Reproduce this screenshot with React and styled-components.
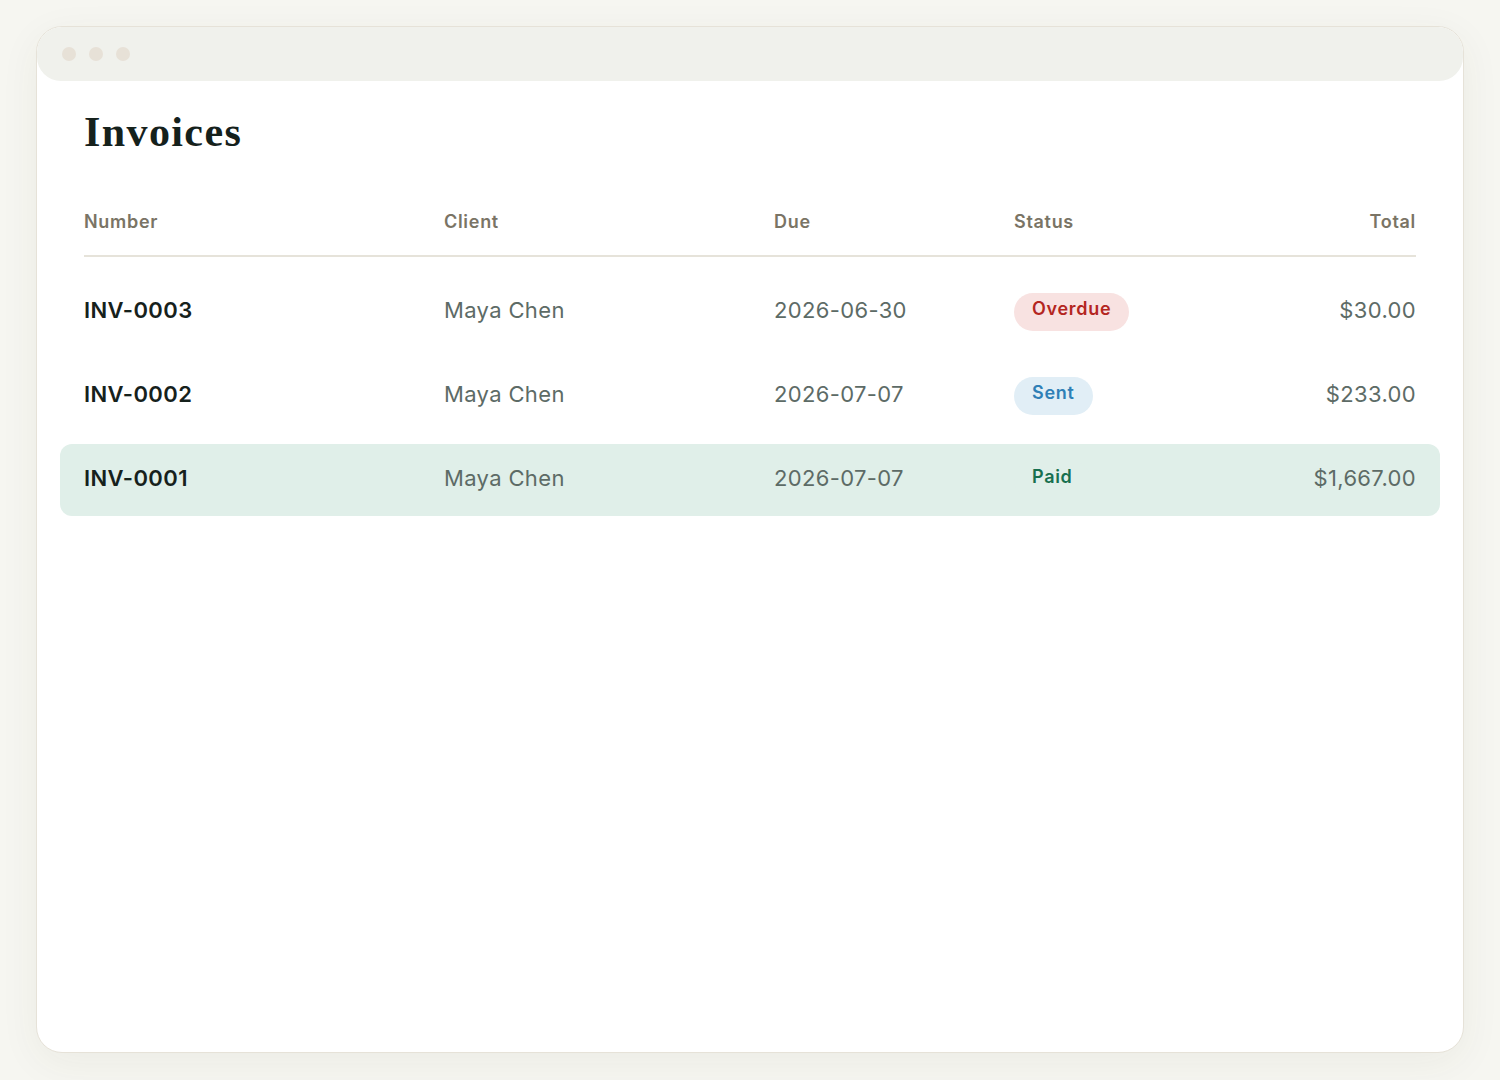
import React from "react";
import styled, { createGlobalStyle } from "styled-components";

const Global = createGlobalStyle`
  html, body { margin: 0; padding: 0; }
  body {
    background: #f6f6f1;
    font-family: Inter, "Noto Sans", sans-serif;
    -webkit-font-smoothing: antialiased;
  }
`;

const Page = styled.div`
  padding: 26px 36px 0;
  box-sizing: border-box;
  height: 1080px;
`;

const Window = styled.div`
  height: 1027px;
  box-sizing: border-box;
  background: #ffffff;
  border: 1.5px solid #e6e2d8;
  border-radius: 26px;
  box-shadow: 0 10px 40px rgba(60, 60, 40, 0.06);
  overflow: hidden;
  display: flex;
  flex-direction: column;
`;

const TitleBar = styled.div`
  height: 54px;
  background: #f0f1ec;
  border-radius: 24px;
  display: flex;
  align-items: center;
  gap: 13px;
  padding-left: 25px;
  flex-shrink: 0;
`;

const Dot = styled.span`
  width: 14px;
  height: 14px;
  border-radius: 50%;
  background: #e7e1d7;
`;

const Content = styled.div`
  padding: 26px 47px 0;
`;

const Title = styled.h1`
  margin: 0;
  font-family: "Liberation Serif", "Times New Roman", serif;
  font-weight: 700;
  font-size: 42px;
  line-height: 50px;
  color: #15211c;
  letter-spacing: 1.4px;
`;

const Table = styled.div`
  margin-top: 46px;
  display: flex;
  flex-direction: column;
`;

const cols = "360px 330px 240px 1fr";

const HeaderRow = styled.div`
  display: grid;
  grid-template-columns: ${cols};
  align-items: center;
  height: 37px;
  padding-bottom: 15px;
  border-bottom: 2px solid #e6e3da;
`;

const HeadCell = styled.div`
  font-size: 18px;
  font-weight: 600;
  letter-spacing: 0.7px;
  color: #7a7465;
`;

const HeadSplit = styled(HeadCell)`
  display: flex;
  justify-content: space-between;
`;

const Rows = styled.div`
  display: flex;
  flex-direction: column;
  gap: 12px;
  padding-top: 19px;
`;

const Row = styled.div`
  display: grid;
  grid-template-columns: ${cols};
  align-items: center;
  height: 72px;
  box-sizing: border-box;
  margin: 0 -24px;
  padding: 0 24px 5px;
  border-radius: 12px;
  background: ${(p) => (p.$active ? "#e0efe9" : "transparent")};
`;

const NumCell = styled.div`
  font-size: 22px;
  font-weight: 600;
  letter-spacing: 0.4px;
  color: #16211c;
`;

const TextCell = styled.div`
  font-size: 22px;
  font-weight: 400;
  letter-spacing: 0.35px;
  color: #5d6b66;
  text-align: ${(p) => (p.$right ? "right" : "left")};
`;

const StatusTotal = styled.div`
  display: flex;
  justify-content: space-between;
  align-items: center;
`;

const badgeColors = {
  Overdue: { bg: "#f8e2e1", fg: "#b4261f" },
  Sent: { bg: "#e1eef6", fg: "#2f7fb6" },
  Paid: { bg: "#e0efe9", fg: "#17704f" },
};

const Badge = styled.span`
  display: inline-block;
  font-size: 18px;
  font-weight: 600;
  letter-spacing: 0.7px;
  line-height: 22px;
  padding: 5px 18px 11px;
  margin-top: 5px;
  border-radius: 19px;
  background: ${(p) => badgeColors[p.$status].bg};
  color: ${(p) => badgeColors[p.$status].fg};
`;

const invoices = [
  { num: "INV-0003", client: "Maya Chen", due: "2026-06-30", status: "Overdue", total: "$30.00" },
  { num: "INV-0002", client: "Maya Chen", due: "2026-07-07", status: "Sent", total: "$233.00" },
  { num: "INV-0001", client: "Maya Chen", due: "2026-07-07", status: "Paid", total: "$1,667.00", active: true },
];

export default function App() {
  return (
    <>
      <Global />
      <Page>
        <Window>
          <TitleBar>
            <Dot />
            <Dot />
            <Dot />
          </TitleBar>
          <Content>
            <Title>Invoices</Title>
            <Table>
              <HeaderRow>
                <HeadCell>Number</HeadCell>
                <HeadCell>Client</HeadCell>
                <HeadCell>Due</HeadCell>
                <HeadSplit>
                  <span>Status</span>
                  <span>Total</span>
                </HeadSplit>
              </HeaderRow>
              <Rows>
                {invoices.map((inv) => (
                  <Row key={inv.num} $active={inv.active}>
                    <NumCell>{inv.num}</NumCell>
                    <TextCell>{inv.client}</TextCell>
                    <TextCell>{inv.due}</TextCell>
                    <StatusTotal>
                      <Badge $status={inv.status}>{inv.status}</Badge>
                      <TextCell $right>{inv.total}</TextCell>
                    </StatusTotal>
                  </Row>
                ))}
              </Rows>
            </Table>
          </Content>
        </Window>
      </Page>
    </>
  );
}
